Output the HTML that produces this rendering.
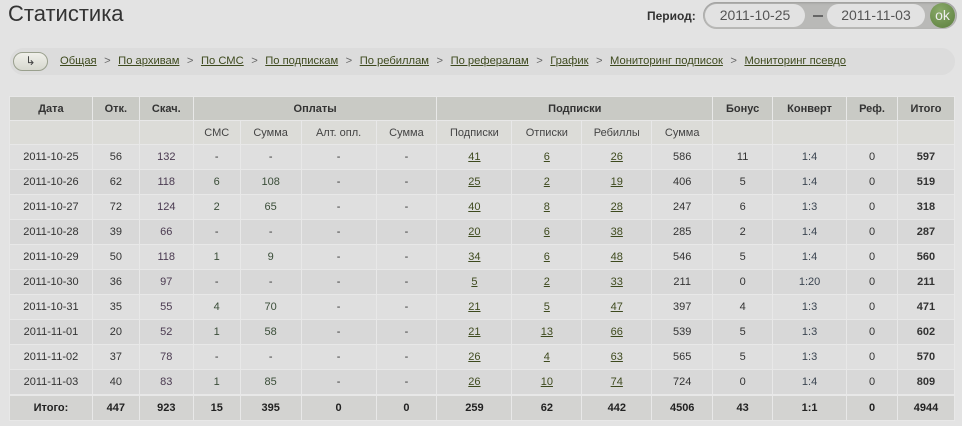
<!DOCTYPE html>
<html><head><meta charset="utf-8"><style>
*{margin:0;padding:0;box-sizing:border-box}
body{width:962px;height:426px;background:#e3e3e3;font-family:"Liberation Sans",Arial,sans-serif;position:relative;overflow:hidden;color:#333}
h1{position:absolute;left:8px;top:1px;font-weight:normal;font-size:22px;color:#333}
.per{position:absolute;left:647px;top:9px;font-weight:bold;font-size:12px;color:#333}
.box{position:absolute;left:703px;top:2px;width:254px;height:27px;background:#b9b9b7;border-radius:14px;box-shadow:inset 0 1px 2px #999}
.pill{position:absolute;top:2px;height:23px;background:#e2e2e2;border-radius:12px;font-size:14px;color:#555;text-align:center;line-height:23px}
.dash{position:absolute;left:110px;top:13px;width:10px;height:2px;background:#666}
.ok{position:absolute;left:227px;top:1px;width:25px;height:25px;border-radius:50%;background:radial-gradient(circle at 40% 30%,#8aaa6a,#5b7e3c);color:#eee;font-size:14px;text-align:center;line-height:24px}
.bar{position:absolute;left:10px;top:48px;width:945px;height:27px;background:#dcdcdc;border-radius:14px}
.btn{position:absolute;left:3px;top:4px;width:35px;height:19px;border:1px solid #9aa08e;border-radius:10px;background:linear-gradient(#f0f0ea,#d7d8cf);font-size:12px;text-align:center;line-height:16px;color:#444}
.nav{position:absolute;left:50px;top:7px;font-size:11.2px;white-space:nowrap}
.nav a{color:#3e4a1e;text-decoration:underline}
.nav span{color:#666;margin:0 7.5px}
table{position:absolute;left:9px;top:96px;width:946px;border-collapse:collapse;font-size:11px;text-align:center}
td,th{border:1px solid #e8e8e8;padding:0}
th{font-weight:bold;color:#333;height:24px;background:#c9cac5}
tr.h2 td{background:#dcdcd8;height:24px;color:#444}
tr.d td{height:25px;background:#dfdfdf}
tr.d:nth-child(even) td{background:#d8d8d8}
tr.t td{height:26px;background:#d3d3d1;font-weight:bold;border-top:2px solid #e8e8e8;color:#222}
td a{color:#3e4a1e;text-decoration:underline}
.p{color:#4a3a50}.g{color:#3a4d38}.b{color:#3a4450}
td.r{font-weight:bold}
</style></head><body>
<h1>Статистика</h1>
<div class="per">Период:</div>
<div class="box"><div class="pill" style="left:2px;width:100px">2011-10-25</div><div class="dash"></div><div class="pill" style="left:124px;width:98px">2011-11-03</div><div class="ok">ok</div></div>
<div class="bar"><div class="btn">&#8627;</div><div class="nav"><a>Общая</a><span>&gt;</span><a>По архивам</a><span>&gt;</span><a>По СМС</a><span>&gt;</span><a>По подпискам</a><span>&gt;</span><a>По ребиллам</a><span>&gt;</span><a>По рефералам</a><span>&gt;</span><a>График</a><span>&gt;</span><a>Мониторинг подписок</a><span>&gt;</span><a>Мониторинг псевдо</a></div></div>
<table>
<colgroup><col style="width:83px"><col style="width:47px"><col style="width:54px"><col style="width:47px"><col style="width:61px"><col style="width:75px"><col style="width:61px"><col style="width:75px"><col style="width:70px"><col style="width:70px"><col style="width:61px"><col style="width:60px"><col style="width:74px"><col style="width:51px"><col style="width:57px"></colgroup>
<tr><th>Дата</th><th>Отк.</th><th>Скач.</th><th colspan="4">Оплаты</th><th colspan="4">Подписки</th><th>Бонус</th><th>Конверт</th><th>Реф.</th><th>Итого</th></tr>
<tr class="h2"><td></td><td></td><td></td><td>СМС</td><td>Сумма</td><td>Алт. опл.</td><td>Сумма</td><td>Подписки</td><td>Отписки</td><td>Ребиллы</td><td>Сумма</td><td></td><td></td><td></td><td></td></tr>
<tr class="d"><td>2011-10-25</td><td>56</td><td class="p">132</td><td>-</td><td>-</td><td>-</td><td>-</td><td><a>41</a></td><td><a>6</a></td><td><a>26</a></td><td>586</td><td>11</td><td class="b">1:4</td><td>0</td><td class="r">597</td></tr>
<tr class="d"><td>2011-10-26</td><td>62</td><td class="p">118</td><td class="g">6</td><td class="g">108</td><td>-</td><td>-</td><td><a>25</a></td><td><a>2</a></td><td><a>19</a></td><td>406</td><td>5</td><td class="b">1:4</td><td>0</td><td class="r">519</td></tr>
<tr class="d"><td>2011-10-27</td><td>72</td><td class="p">124</td><td class="g">2</td><td class="g">65</td><td>-</td><td>-</td><td><a>40</a></td><td><a>8</a></td><td><a>28</a></td><td>247</td><td>6</td><td class="b">1:3</td><td>0</td><td class="r">318</td></tr>
<tr class="d"><td>2011-10-28</td><td>39</td><td class="p">66</td><td>-</td><td>-</td><td>-</td><td>-</td><td><a>20</a></td><td><a>6</a></td><td><a>38</a></td><td>285</td><td>2</td><td class="b">1:4</td><td>0</td><td class="r">287</td></tr>
<tr class="d"><td>2011-10-29</td><td>50</td><td class="p">118</td><td class="g">1</td><td class="g">9</td><td>-</td><td>-</td><td><a>34</a></td><td><a>6</a></td><td><a>48</a></td><td>546</td><td>5</td><td class="b">1:4</td><td>0</td><td class="r">560</td></tr>
<tr class="d"><td>2011-10-30</td><td>36</td><td class="p">97</td><td>-</td><td>-</td><td>-</td><td>-</td><td><a>5</a></td><td><a>2</a></td><td><a>33</a></td><td>211</td><td>0</td><td class="b">1:20</td><td>0</td><td class="r">211</td></tr>
<tr class="d"><td>2011-10-31</td><td>35</td><td class="p">55</td><td class="g">4</td><td class="g">70</td><td>-</td><td>-</td><td><a>21</a></td><td><a>5</a></td><td><a>47</a></td><td>397</td><td>4</td><td class="b">1:3</td><td>0</td><td class="r">471</td></tr>
<tr class="d"><td>2011-11-01</td><td>20</td><td class="p">52</td><td class="g">1</td><td class="g">58</td><td>-</td><td>-</td><td><a>21</a></td><td><a>13</a></td><td><a>66</a></td><td>539</td><td>5</td><td class="b">1:3</td><td>0</td><td class="r">602</td></tr>
<tr class="d"><td>2011-11-02</td><td>37</td><td class="p">78</td><td>-</td><td>-</td><td>-</td><td>-</td><td><a>26</a></td><td><a>4</a></td><td><a>63</a></td><td>565</td><td>5</td><td class="b">1:3</td><td>0</td><td class="r">570</td></tr>
<tr class="d"><td>2011-11-03</td><td>40</td><td class="p">83</td><td class="g">1</td><td class="g">85</td><td>-</td><td>-</td><td><a>26</a></td><td><a>10</a></td><td><a>74</a></td><td>724</td><td>0</td><td class="b">1:4</td><td>0</td><td class="r">809</td></tr>
<tr class="t"><td>Итого:</td><td>447</td><td>923</td><td>15</td><td>395</td><td>0</td><td>0</td><td>259</td><td>62</td><td>442</td><td>4506</td><td>43</td><td>1:1</td><td>0</td><td>4944</td></tr>
</table>
</body></html>
